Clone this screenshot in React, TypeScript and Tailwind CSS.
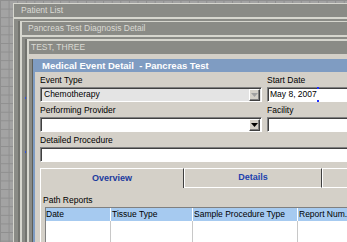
import React from "react";

function Combo({ value, disabled }: { value?: string; disabled?: boolean }) {
  return (
    <div
      className={`h-[15px] flex items-center border border-[#808080] border-b-white border-r-white shadow-[inset_1px_1px_0_#404040] pl-[3px] pr-[1px] ${disabled ? "bg-[#e4e4e4]" : "bg-white"}`}
    >
      <span className="flex-1 leading-[11px] whitespace-nowrap">{value}</span>
      <div className="w-[11px] h-[12px] bg-[#d4d0c8] border border-white border-b-[#404040] border-r-[#404040] shadow-[inset_-1px_-1px_0_#808080] flex items-center justify-center">
        <svg width="7" height="4" viewBox="0 0 7 4">
          <path d="M0 0h7L3.5 4z" fill={disabled ? "#a0a0a0" : "#000000"} />
        </svg>
      </div>
    </div>
  );
}

function Input({ value, children }: { value?: string; children?: React.ReactNode }) {
  return (
    <div className="relative h-[15px] flex items-center border border-[#808080] border-b-white border-r-white shadow-[inset_1px_1px_0_#404040] bg-white pl-[2px]">
      <span className="leading-[11px] whitespace-nowrap">{value}</span>
      {children}
    </div>
  );
}

function Label({ children }: { children: React.ReactNode }) {
  return <div className="h-[14px] pt-[2px] leading-[10px] whitespace-nowrap">{children}</div>;
}

export default function App() {
  return (
    <div className="relative w-[347px] h-[242px] overflow-hidden flex pl-[13px] pt-[3px] bg-[#a3a3a3] bg-[linear-gradient(#8f8f8f_1px,transparent_1px),linear-gradient(90deg,#8f8f8f_1px,transparent_1px)] bg-[size:8.6px_8.6px] font-[family-name:'Liberation_Sans',Arial,sans-serif] text-[8.5px] text-black">
      {/* Window 1 */}
      <div className="flex-1 min-w-0 flex flex-col border-l border-t border-[#d6d6ce] bg-[#8a8b86]">
        <div className="h-[13px] shrink-0 pl-[7px] leading-[13px] text-[#dadad4] whitespace-nowrap">Patient List</div>
        <div className="flex-1 min-h-0 flex border-t-2 border-[#d6d6ce] pl-[4px] pt-[2px]">
          <div className="flex-1 min-w-0 flex border-l-2 border-[#72736e]">
            {/* Window 2 */}
            <div className="flex-1 min-w-0 flex flex-col border-l-2 border-t border-[#d6d6ce] bg-[#8a8b86]">
              <div className="h-[13px] shrink-0 pl-[6px] leading-[13px] text-[#dadad4] whitespace-nowrap">
                Pancreas Test Diagnosis Detail
              </div>
              <div className="flex-1 min-h-0 flex border-t-2 border-[#d6d6ce] pl-[3px] pt-[2px]">
                <div className="flex-1 min-w-0 flex border-l-2 border-[#72736e]">
                  {/* Window 3 */}
                  <div className="flex-1 min-w-0 flex flex-col border-l-2 border-t-2 border-[#d6d6ce] bg-[#8a8b86]">
                    <div className="h-[13px] shrink-0 pl-[2px] leading-[13px] text-[#dadad4] whitespace-nowrap">
                      TEST, THREE
                    </div>
                    <div className="flex-1 min-h-0 flex border-t-[5px] border-[#d4d0c8] pl-[3px]">
                      <div className="flex-1 min-w-0 flex border-l border-[#5e5f5a]">
                        {/* Window 4 */}
                        <div className="flex-1 min-w-0 flex flex-col">
                          <div className="h-[13px] shrink-0 bg-[#7f9cc2] pl-[9px] leading-[13px] text-[9.5px] font-bold text-white whitespace-pre">
                            {"Medical Event Detail  - Pancreas Test"}
                          </div>
                          <div className="flex-1 min-h-0 flex flex-col border-l-2 border-[#7f9cc2] bg-[#d4d0c8] pl-[5px] pt-[1px]">
                            <div className="flex gap-[5px]">
                              <div className="w-[222px] shrink-0 flex flex-col">
                                <Label>Event Type</Label>
                                <Combo value="Chemotherapy" disabled />
                              </div>
                              <div className="w-[100px] shrink-0 flex flex-col">
                                <Label>Start Date</Label>
                                <Input value="May 8, 2007">
                                  <span className="absolute left-[49px] top-[-1px] w-[2px] h-[2px] bg-[#2030ff]" />
                                  <span className="absolute left-[49px] bottom-[-1px] w-[2px] h-[2px] bg-[#2030ff]" />
                                </Input>
                              </div>
                            </div>
                            <div className="flex gap-[5px] mt-[1px]">
                              <div className="w-[222px] shrink-0 flex flex-col">
                                <Label>Performing Provider</Label>
                                <Combo />
                              </div>
                              <div className="w-[100px] shrink-0 flex flex-col">
                                <Label>Facility</Label>
                                <Input />
                              </div>
                            </div>
                            <div className="flex flex-col mt-[1px] w-[330px] shrink-0">
                              <Label>Detailed Procedure</Label>
                              <Input />
                            </div>
                            {/* Tabs */}
                            <div className="mt-[6px] flex-1 min-h-0 flex flex-col w-[330px] shrink-0">
                              <div className="flex h-[20px] shrink-0">
                                <div className="w-[144px] shrink-0 border-l border-t border-white border-r border-r-[#404040] flex items-center justify-center font-bold text-[9px] text-[#1b3a9e]">
                                  Overview
                                </div>
                                <div className="w-[138px] shrink-0 border border-white border-r-[#404040] flex items-center justify-center font-bold text-[9px] text-[#2141ae]">
                                  Details
                                </div>
                                <div className="w-[60px] shrink-0 border-l border-t border-b border-white" />
                              </div>
                              <div className="flex-1 min-h-0 flex flex-col border-l border-white">
                                <div className="pt-[7px] pl-[2px] h-[17px] leading-[10px] whitespace-nowrap">Path Reports</div>
                                <div className="mt-[2px] ml-[4px] flex-1 flex flex-col border-l border-t border-[#808080]">
                                  <div className="flex h-[13px] bg-[#a6caf0] leading-[13px] whitespace-nowrap">
                                    <div className="w-[65px] shrink-0 border-r border-white">Date</div>
                                    <div className="w-[82px] shrink-0 border-r border-white pl-[1px]">Tissue Type</div>
                                    <div className="w-[105px] shrink-0 border-r border-white pl-[1px]">Sample Procedure Type</div>
                                    <div className="w-[80px] shrink-0 pl-[1px]">Report Num.</div>
                                  </div>
                                  <div className="flex-1 flex bg-white">
                                    <div className="w-[65px] shrink-0 border-r border-[#c8c8c8]" />
                                    <div className="w-[82px] shrink-0 border-r border-[#c8c8c8]" />
                                    <div className="w-[105px] shrink-0 border-r border-[#c8c8c8]" />
                                    <div className="w-[80px] shrink-0" />
                                  </div>
                                </div>
                              </div>
                            </div>
                          </div>
                        </div>
                      </div>
                    </div>
                  </div>
                </div>
              </div>
            </div>
          </div>
        </div>
      </div>
      <span className="absolute left-[25px] top-[97px] w-[1px] h-[2px] bg-[#3050e0]" />
      <span className="absolute left-[25px] top-[151px] w-[1px] h-[2px] bg-[#3050e0]" />
    </div>
  );
}
